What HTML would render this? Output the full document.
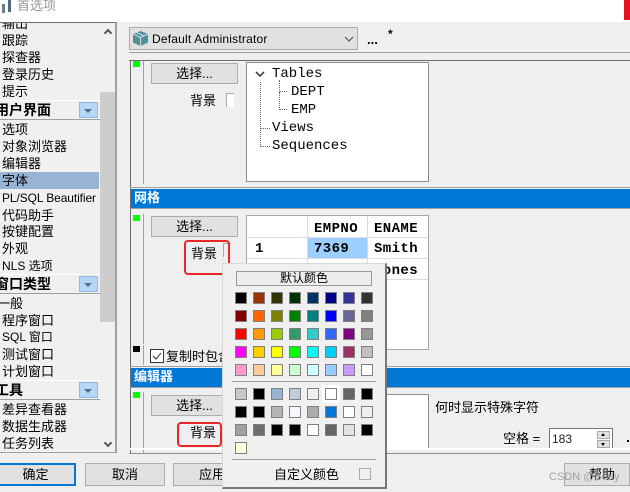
<!DOCTYPE html>
<html><head><meta charset="utf-8">
<style>
html,body{margin:0;padding:0}
body{width:630px;height:492px;overflow:hidden;position:relative;background:#efefef;font-family:"Liberation Sans","Noto Sans CJK SC",sans-serif;font-size:13px;color:#000}
.a{position:absolute}
.t{position:absolute;white-space:nowrap;line-height:17px;height:17px;font-size:13px}
.m{font-family:"Liberation Mono","Noto Sans CJK SC",monospace;font-weight:bold;font-size:14px;letter-spacing:.4px}
.h{position:absolute;left:0;width:100px;height:20px;background:#f0f0f0;border-top:1px solid #fff;border-bottom:1px solid #a0a0a0;box-sizing:border-box;font-weight:bold;font-size:14px;line-height:18px;white-space:nowrap;overflow:hidden}
.b{position:absolute;left:79px;top:1px;width:19px;height:16px;background:#b5d6f6;border:1px solid #8fbce6;box-sizing:border-box}
.b:after{content:"";position:absolute;left:4px;top:6px;border-left:4px solid transparent;border-right:4px solid transparent;border-top:4px solid #4f6f96}
.btn{position:absolute;background:#e1e1e1;border:1px solid #adadad;box-sizing:border-box;text-align:center;font-size:13px;line-height:19px}
.blue{position:absolute;left:131px;width:499px;height:19px;background:#0078d7;color:#fff;font-weight:bold;font-size:13px;line-height:18px;padding-left:3px;box-sizing:border-box}
.g{position:absolute;width:7px;height:6px;background:#0f0}
.red{position:absolute;border:2px solid #e8262a;border-radius:4px;box-sizing:border-box}
.dot{position:absolute;border-left:1px dotted #666;border-bottom:1px dotted #666;box-sizing:border-box}
.grid{position:absolute;left:235px;display:grid;grid-template-columns:repeat(8,12px);column-gap:6px;row-gap:6px}
.grid i{display:block;width:12px;height:12px;border:1px solid #808080;box-sizing:border-box}
.sep{position:absolute;left:232px;width:144px;height:1px;background:#a0a0a0}
</style></head><body>

<!-- title bar -->
<div class="a" style="left:0;top:0;width:630px;height:22px;background:#fff"></div>
<div class="a" style="left:624px;top:0;width:6px;height:20px;background:#e81123"></div>
<div class="a" style="left:2px;top:4px;width:3px;height:9px;background:#6b7f8f"></div>
<div class="a" style="left:8px;top:0;width:3px;height:12px;background:#4a6b85"></div>
<div class="t" style="left:17px;top:-3px;color:#999;font-size:13px">首选项</div>

<!-- sidebar -->
<div class="a" style="left:0;top:22px;width:117px;height:431px;border-top:1px solid #6d6d6d;border-right:2px solid #a0a0a0;border-bottom:1px solid #a0a0a0;box-sizing:border-box;overflow:hidden;background:#f0f0f0"></div>
<div class="a" style="left:100px;top:23px;width:15px;height:429px;background:#f0f0f0"></div>
<div class="a" style="left:100px;top:92px;width:15px;height:230px;background:#cdcdcd"></div>
<div class="a" style="left:105px;top:30px;width:4px;height:4px;border-left:2px solid #555;border-top:2px solid #555;transform:rotate(45deg)"></div>
<div class="a" style="left:105px;top:440px;width:4px;height:4px;border-right:2px solid #555;border-bottom:2px solid #555;transform:rotate(45deg)"></div>
<div class="a" style="left:0;top:172px;width:99px;height:17px;background:#98b4d4"></div>

<div class="a" style="left:0;top:23px;width:100px;height:8px;overflow:hidden"><div class="t" style="left:2px;top:-8px">输出</div></div>
<div class="t" style="left:2px;top:32px">跟踪</div>
<div class="t" style="left:2px;top:49px">探查器</div>
<div class="t" style="left:2px;top:66px">登录历史</div>
<div class="t" style="left:2px;top:83px">提示</div>
<div class="h" style="top:100px"><span style="margin-left:-5px">用户界面</span><div class="b"></div></div>
<div class="t" style="left:2px;top:121px">选项</div>
<div class="t" style="left:2px;top:138px">对象浏览器</div>
<div class="t" style="left:2px;top:155px">编辑器</div>
<div class="t" style="left:2px;top:172px">字体</div>
<div class="t" style="left:2px;top:190px;font-size:12px;letter-spacing:-.1px">PL/SQL Beautifier</div>
<div class="t" style="left:2px;top:207px">代码助手</div>
<div class="t" style="left:2px;top:223px">按键配置</div>
<div class="t" style="left:2px;top:240px">外观</div>
<div class="t" style="left:2px;top:258px;font-size:12px">NLS 选项</div>
<div class="h" style="top:274px"><span style="margin-left:-5px">窗口类型</span><div class="b"></div></div>
<div class="t" style="left:-3px;top:295px">一般</div>
<div class="t" style="left:2px;top:312px">程序窗口</div>
<div class="t" style="left:2px;top:329px;font-size:12px">SQL 窗口</div>
<div class="t" style="left:2px;top:346px">测试窗口</div>
<div class="t" style="left:2px;top:363px">计划窗口</div>
<div class="h" style="top:380px"><span style="margin-left:-5px">工具</span><div class="b"></div></div>
<div class="t" style="left:2px;top:401px">差异查看器</div>
<div class="t" style="left:2px;top:418px">数据生成器</div>
<div class="t" style="left:2px;top:435px">任务列表</div>

<!-- toolbar -->
<div class="a" style="left:129px;top:27px;width:229px;height:23px;background:#e1e1e1;border:1px solid #adadad;box-sizing:border-box"></div>
<svg class="a" style="left:133px;top:31px" width="15" height="15" viewBox="0 0 15 15"><path d="M7.500 0L15 3v8.500L7.500 15 0 11.500V3z" fill="#4f9097"/><path d="M0 3l7.500 3.500L15 3M7.500 6.500V15M3.500 1.500l7.500 3.300" stroke="#cfe0e2" stroke-width="1" fill="none"/></svg>
<div class="t" style="left:152px;top:31px;font-size:12px;letter-spacing:.2px">Default Administrator</div>
<svg class="a" style="left:344px;top:36px" width="10" height="6" viewBox="0 0 10 6"><path d="M1 1l4 4 4-4" stroke="#555" stroke-width="1.200" fill="none"/></svg>
<div class="t" style="left:367px;top:31px;font-weight:bold;font-size:13px">...</div>
<div class="t" style="left:388px;top:26px;font-size:12px;font-weight:bold">*</div>
<div class="a" style="left:129px;top:52px;width:501px;height:1px;background:#a0a0a0"></div>

<!-- main panel frame -->
<div class="a" style="left:129px;top:60px;width:501px;height:1px;background:#6d6d6d"></div>
<div class="a" style="left:130px;top:60px;width:1px;height:393px;background:#6d6d6d"></div>
<div class="a" style="left:143px;top:61px;width:1px;height:123px;background:#a0a0a0"></div>
<div class="a" style="left:143px;top:214px;width:1px;height:130px;background:#a0a0a0"></div>
<div class="a" style="left:143px;top:345px;width:1px;height:20px;background:#a0a0a0"></div>
<div class="a" style="left:143px;top:392px;width:1px;height:61px;background:#a0a0a0"></div>
<div class="g" style="left:133px;top:61px"></div>
<div class="g" style="left:133px;top:215px"></div>
<div class="g" style="left:133px;top:392px"></div>
<div class="a" style="left:133px;top:346px;width:7px;height:6px;background:#000"></div>

<!-- section 1 -->
<div class="btn" style="left:151px;top:63px;width:87px;height:21px">选择...</div>
<div class="t" style="left:190px;top:92px">背景</div>
<div class="a" style="left:226px;top:93px;width:8px;height:14px;background:#fff;border-left:1px solid #aaa;border-top:1px solid #aaa;box-sizing:border-box"></div>
<div class="a" style="left:246px;top:62px;width:183px;height:120px;background:#fff;border:1px solid #8c8c8c;box-sizing:border-box"></div>
<svg class="a" style="left:255px;top:71px" width="14" height="8" viewBox="0 0 14 8"><path d="M1 1l4 4 4-4" stroke="#444" stroke-width="1.600" fill="none"/></svg>
<div class="dot" style="left:260px;top:82px;width:1px;height:65px;border-bottom:0"></div>
<div class="dot" style="left:279px;top:80px;width:8px;height:12px;border-left:1px dotted #666"></div>
<div class="dot" style="left:279px;top:92px;width:8px;height:18px"></div>
<div class="dot" style="left:261px;top:128px;width:9px;height:1px;border-left:0"></div>
<div class="dot" style="left:261px;top:146px;width:9px;height:1px;border-left:0"></div>
<div class="t m" style="left:272px;top:66px;font-weight:normal;letter-spacing:0">Tables</div>
<div class="t m" style="left:291px;top:84px;font-weight:normal;letter-spacing:0">DEPT</div>
<div class="t m" style="left:291px;top:102px;font-weight:normal;letter-spacing:0">EMP</div>
<div class="t m" style="left:272px;top:120px;font-weight:normal;letter-spacing:0">Views</div>
<div class="t m" style="left:272px;top:138px;font-weight:normal;letter-spacing:0">Sequences</div>

<!-- 网格 -->
<div class="a" style="left:130px;top:187px;width:500px;height:1px;background:#a0a0a0"></div>
<div class="blue" style="top:189px">网格</div>
<div class="a" style="left:130px;top:208px;width:500px;height:1px;background:#a0a0a0"></div>
<div class="btn" style="left:151px;top:216px;width:87px;height:21px">选择...</div>
<div class="t" style="left:191px;top:245px">背景</div>
<div class="a" style="left:223px;top:243px;width:8px;height:14px;border-left:1px solid #aaa;border-top:1px solid #aaa;box-sizing:border-box"></div>
<div class="a" style="left:246px;top:215px;width:183px;height:135px;background:#fff;border:1px solid #a8a8a8;box-sizing:border-box"></div>
<div class="a" style="left:247px;top:237px;width:181px;height:1px;background:#dcdcdc"></div>
<div class="a" style="left:247px;top:258px;width:181px;height:1px;background:#dcdcdc"></div>
<div class="a" style="left:247px;top:279px;width:181px;height:1px;background:#dcdcdc"></div>
<div class="a" style="left:307px;top:216px;width:1px;height:100px;background:#dcdcdc"></div>
<div class="a" style="left:367px;top:216px;width:1px;height:100px;background:#dcdcdc"></div>
<div class="a" style="left:308px;top:238px;width:59px;height:20px;background:#9ccffb"></div>
<div class="t m" style="left:314px;top:221px">EMPNO</div>
<div class="t m" style="left:374px;top:221px">ENAME</div>
<div class="t m" style="left:255px;top:241px">1</div>
<div class="t m" style="left:314px;top:241px">7369</div>
<div class="t m" style="left:374px;top:241px">Smith</div>
<div class="t m" style="left:374px;top:263px">Jones</div>
<div class="red" style="left:184px;top:240px;width:46px;height:35px"></div>

<!-- 复制时包含 -->
<div class="a" style="left:150px;top:349px;width:14px;height:14px;border:1px solid #333;box-sizing:border-box;background:#fff"></div>
<svg class="a" style="left:151px;top:350px" width="12" height="12" viewBox="0 0 12 12"><path d="M2 6l3 3 5-6" stroke="#555" stroke-width="1.300" fill="none"/></svg>
<div class="t" style="left:166px;top:348px">复制时包含</div>

<!-- 编辑器 -->
<div class="a" style="left:130px;top:366px;width:500px;height:1px;background:#a0a0a0"></div>
<div class="blue" style="top:368px">编辑器</div>
<div class="a" style="left:130px;top:387px;width:500px;height:1px;background:#a0a0a0"></div>
<div class="btn" style="left:151px;top:395px;width:87px;height:21px">选择...</div>
<div class="t" style="left:190px;top:424px">背景</div>
<div class="red" style="left:177px;top:422px;width:45px;height:25px"></div>
<div class="a" style="left:246px;top:394px;width:183px;height:54px;background:#fff;border:1px solid #8c8c8c;border-bottom:0;box-sizing:border-box"></div>
<div class="t" style="left:435px;top:399px">何时显示特殊字符</div>
<div class="t" style="left:503px;top:430px">空格 =</div>
<div class="a" style="left:549px;top:428px;width:64px;height:20px;background:#fff;border:1px solid #777;border-bottom:0;box-sizing:border-box"></div>
<div class="t" style="left:552px;top:431px;font-size:12px;color:#222">183</div>
<div class="a" style="left:597px;top:431px;width:13px;height:8px;background:#e1e1e1;border:1px solid #aaa;box-sizing:border-box"></div>
<div class="a" style="left:597px;top:440px;width:13px;height:8px;background:#e1e1e1;border:1px solid #aaa;box-sizing:border-box"></div>
<div class="a" style="left:601px;top:433px;border-left:2px solid transparent;border-right:2px solid transparent;border-bottom:3px solid #000"></div>
<div class="a" style="left:601px;top:443px;border-left:2px solid transparent;border-right:2px solid transparent;border-top:3px solid #000"></div>
<div class="a" style="left:627px;top:440px;width:2px;height:2px;background:#000"></div>
<div class="a" style="left:129px;top:448px;width:501px;height:2px;background:#fff"></div>

<!-- bottom bar -->
<div class="a" style="left:0;top:453px;width:630px;height:39px;background:#efefef"></div>
<div class="a" style="left:129px;top:453px;width:501px;height:1px;background:#8c8c8c"></div>
<div class="btn" style="left:-5px;top:463px;width:81px;height:23px;border:2px solid #0078d7;line-height:19px">确定</div>
<div class="btn" style="left:85px;top:463px;width:80px;height:23px;line-height:21px">取消</div>
<div class="btn" style="left:173px;top:463px;width:80px;height:23px;line-height:21px;text-align:left;padding-left:25px">应用</div>
<div class="btn" style="left:564px;top:463px;width:66px;height:23px;line-height:21px;padding-left:10px">帮助</div>
<div class="t" style="left:549px;top:469px;font-size:11px;color:#9a9a9a;opacity:.9">CSDN @Betty</div>

<!-- popup -->
<div class="a" style="left:222px;top:263px;width:165px;height:226px;background:#f0f0f0;border-top:1px solid #d8d8d8;border-left:1px solid #d8d8d8;border-right:2px solid #777;border-bottom:2px solid #777;box-sizing:border-box"></div>
<div class="a" style="left:236px;top:271px;width:136px;height:15px;background:#eee;border:1px solid #999;box-sizing:border-box;text-align:center;line-height:13px;font-size:12px">默认颜色</div>
<div class="grid" style="top:292px">
<i style="background:#000"></i><i style="background:#930"></i><i style="background:#330"></i><i style="background:#030"></i><i style="background:#036"></i><i style="background:#008"></i><i style="background:#339"></i><i style="background:#333"></i>
<i style="background:#800000"></i><i style="background:#f60"></i><i style="background:#808000"></i><i style="background:#008000"></i><i style="background:#008080"></i><i style="background:#00f"></i><i style="background:#669"></i><i style="background:#808080"></i>
<i style="background:#f00"></i><i style="background:#f90"></i><i style="background:#9c0"></i><i style="background:#396"></i><i style="background:#3cc"></i><i style="background:#36f"></i><i style="background:#800080"></i><i style="background:#969696"></i>
<i style="background:#f0f"></i><i style="background:#fc0"></i><i style="background:#ff0"></i><i style="background:#0f0"></i><i style="background:#0ff"></i><i style="background:#0cf"></i><i style="background:#936"></i><i style="background:#c0c0c0"></i>
<i style="background:#f9c"></i><i style="background:#fc9"></i><i style="background:#ff9"></i><i style="background:#cfc"></i><i style="background:#cff"></i><i style="background:#9cf"></i><i style="background:#c9f"></i><i style="background:#fff"></i>
</div>
<div class="sep" style="top:381px"></div>
<div class="a" style="left:322px;top:385px;width:18px;height:18px;background:#fff"></div>
<div class="grid" style="top:388px">
<i style="background:#c8c8c8"></i><i style="background:#000"></i><i style="background:#98b4d4"></i><i style="background:#bfcddb"></i><i style="background:#f0f0f0"></i><i style="background:#fff"></i><i style="background:#646464"></i><i style="background:#000"></i>
<i style="background:#000"></i><i style="background:#000"></i><i style="background:#b4b4b4"></i><i style="background:#f4f7fc"></i><i style="background:#ababab"></i><i style="background:#0078d7"></i><i style="background:#fff"></i><i style="background:#f0f0f0"></i>
<i style="background:#a0a0a0"></i><i style="background:#6d6d6d"></i><i style="background:#000"></i><i style="background:#000"></i><i style="background:#fff"></i><i style="background:#646464"></i><i style="background:#e3e3e3"></i><i style="background:#000"></i>
<i style="background:#ffffe1"></i>
</div>
<div class="sep" style="top:459px"></div>
<div class="t" style="left:274px;top:466px">自定义颜色</div>
<div class="a" style="left:359px;top:468px;width:12px;height:12px;border:1px solid #aaa;box-sizing:border-box"></div>

</body></html>
